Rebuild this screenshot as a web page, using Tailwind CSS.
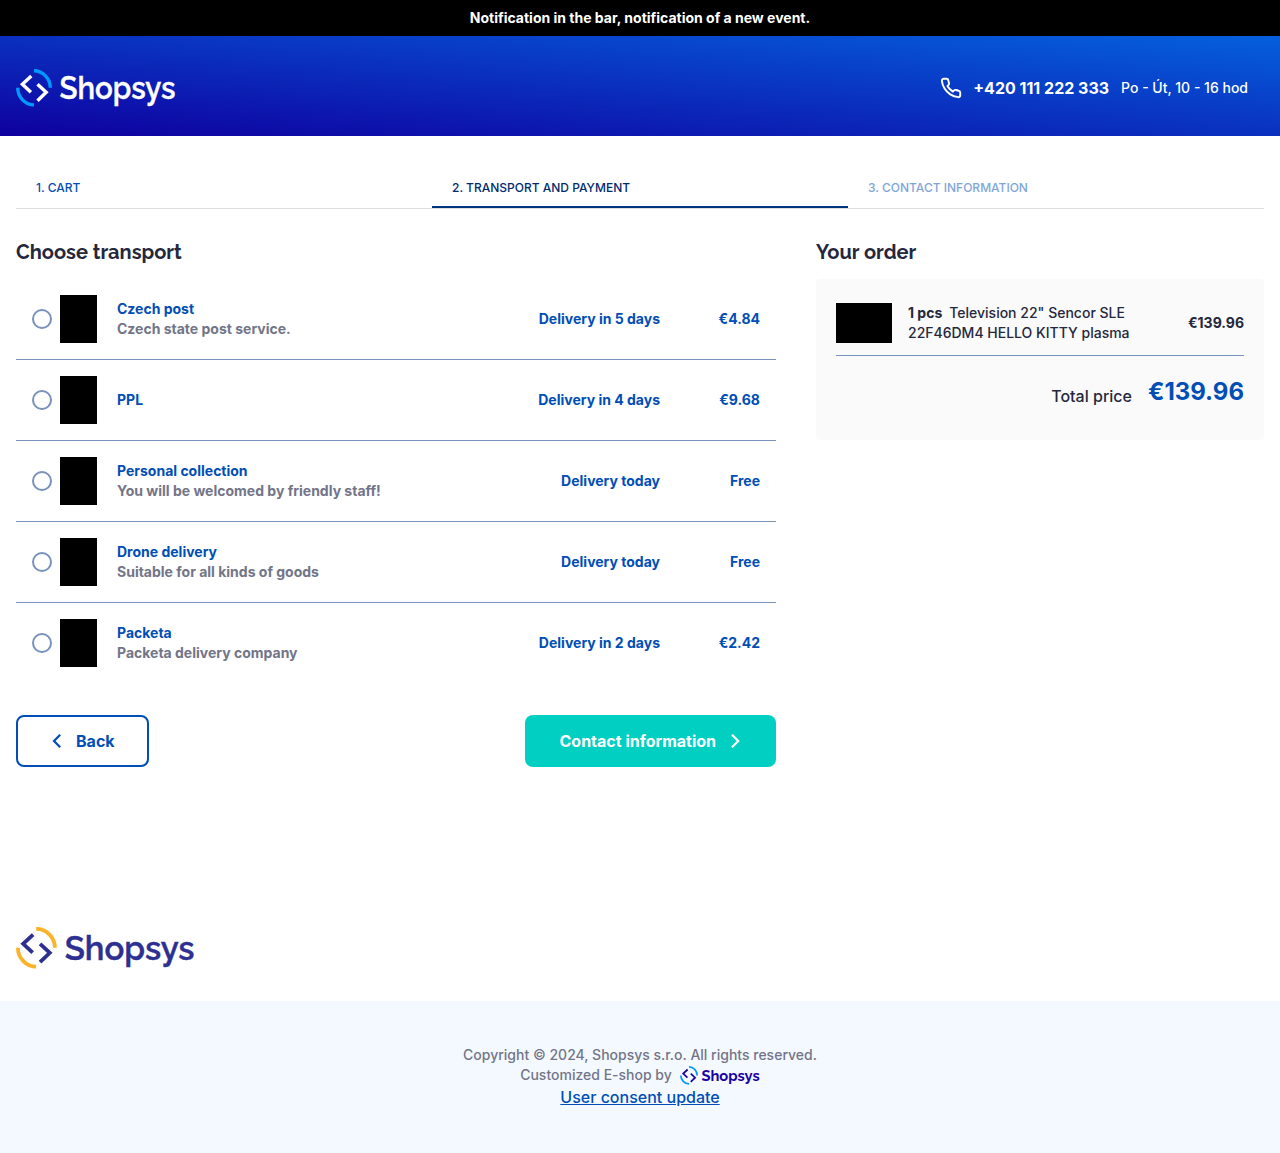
<!DOCTYPE html>
<html lang="en">
<head>
<meta charset="utf-8">
<title>Transport and payment - Shopsys</title>
<script src="https://cdn.jsdelivr.net/npm/@tailwindcss/browser@4"></script>
</head>
<body class="min-h-screen bg-white font-['Inter',sans-serif] text-sm leading-5 font-medium text-[#25283d]">
<div class="flex h-9 items-center justify-center bg-black font-bold text-white">Notification in the bar, notification of a new event.</div>
<header class="flex h-25 items-center justify-between bg-linear-to-tr/srgb from-[#0f00a0] to-[#0560dd] px-4 pt-1">
  <svg class="h-[38px] w-40 overflow-visible text-white" viewBox="0 0 160 38" fill="none" stroke="currentColor" stroke-width="3.4">
    <g stroke="#009aff"><path d="M18 1.8A16.4 17.2 0 0 1 34.3 18.8"/><path d="M1.7 18.8A16.4 17.2 0 0 0 18 35.9"/></g>
    <path d="M15.3 7L6.4 15.2L14.9 23.2M21.5 15.2L30.2 23.3L21.5 31.7"/>
    <text x="43.5" y="30.2" textLength="116" lengthAdjust="spacingAndGlyphs" fill="currentColor" stroke="currentColor" stroke-width="0.4" class="font-['Raleway','Lato',sans-serif] text-[31px] font-semibold">Shopsys</text>
  </svg>
  <div class="flex items-center pr-4 text-white">
    <svg class="size-6" viewBox="-1 -1 26 26" fill="none" stroke="currentColor" stroke-width="2.1" stroke-linecap="round" stroke-linejoin="round"><path d="M22 16.92v3a2 2 0 0 1-2.18 2 19.8 19.8 0 0 1-8.63-3.07 19.5 19.5 0 0 1-6-6A19.8 19.8 0 0 1 2.12 4.18 2 2 0 0 1 4.11 2h3a2 2 0 0 1 2 1.72c.13.96.36 1.9.7 2.81a2 2 0 0 1-.45 2.11L8.09 9.91a16 16 0 0 0 6 6l1.27-1.27a2 2 0 0 1 2.11-.45c.91.34 1.85.57 2.81.7A2 2 0 0 1 22 16.92z"/></svg>
    <span class="ml-2.5 text-base font-bold">+420 111 222 333</span>
    <span class="ml-3">Po - Út, 10 - 16 hod</span>
  </div>
</header>
<main class="px-4 pt-8">
  <nav class="grid h-[41px] grid-cols-3 border-b border-[#dcdfe0] text-xs uppercase">
    <div class="flex items-center px-5 text-[#004eb6]">1. Cart</div>
    <div class="flex items-center border-b-2 border-[#00347f] px-5 pt-0.5 text-[#002c6e]">2. Transport and payment</div>
    <div class="flex items-center px-5 text-[#7fa6da]">3. Contact information</div>
  </nav>
  <div class="flex gap-10 pt-[30px]">
    <section class="w-[760px]">
      <h2 class="h-10 font-['Raleway','Lato',sans-serif] text-xl leading-[26px] font-bold">Choose transport</h2>
      <ul class="divide-y divide-[#7892bc] font-bold text-[#004eb6]">
        <li class="flex h-[81px] items-center px-4"><span class="size-5 rounded-full border-2 border-[#7892bc]"></span><span class="ml-2 h-12 w-[37px] bg-black"></span><div class="ml-5 grow">Czech post<div class="text-[#727588]">Czech state post service.</div></div><span>Delivery in 5 days</span><span class="w-25 text-right">€4.84</span></li>
        <li class="flex h-[81px] items-center px-4"><span class="size-5 rounded-full border-2 border-[#7892bc]"></span><span class="ml-2 h-12 w-[37px] bg-black"></span><div class="ml-5 grow">PPL</div><span>Delivery in 4 days</span><span class="w-25 text-right">€9.68</span></li>
        <li class="flex h-[81px] items-center px-4"><span class="size-5 rounded-full border-2 border-[#7892bc]"></span><span class="ml-2 h-12 w-[37px] bg-black"></span><div class="ml-5 grow">Personal collection<div class="text-[#727588]">You will be welcomed by friendly staff!</div></div><span>Delivery today</span><span class="w-25 text-right">Free</span></li>
        <li class="flex h-[81px] items-center px-4"><span class="size-5 rounded-full border-2 border-[#7892bc]"></span><span class="ml-2 h-12 w-[37px] bg-black"></span><div class="ml-5 grow">Drone delivery<div class="text-[#727588]">Suitable for all kinds of goods</div></div><span>Delivery today</span><span class="w-25 text-right">Free</span></li>
        <li class="flex h-20 items-center px-4"><span class="size-5 rounded-full border-2 border-[#7892bc]"></span><span class="ml-2 h-12 w-[37px] bg-black"></span><div class="ml-5 grow">Packeta<div class="text-[#727588]">Packeta delivery company</div></div><span>Delivery in 2 days</span><span class="w-25 text-right">€2.42</span></li>
      </ul>
      <div class="mt-8 flex justify-between text-base font-bold">
        <button class="flex h-13 w-[133px] items-center rounded-lg border-2 border-[#004eb6] pl-[31px] text-[#004eb6]"><svg class="mr-[11px] size-4" viewBox="0 0 16 16" fill="none" stroke="currentColor" stroke-width="2.2"><path d="M11.2 1.8L5 8L11.2 14.2"/></svg>Back</button>
        <button class="flex h-13 w-[251px] items-center rounded-lg bg-[#00cfc1] pl-[34.5px] text-white">Contact information<svg class="ml-[11.5px] size-4" viewBox="0 0 16 16" fill="none" stroke="currentColor" stroke-width="2.2"><path d="M4 1.8L10.2 8L4 14.2"/></svg></button>
      </div>
    </section>
    <aside class="w-[448px]">
      <h2 class="h-10 font-['Raleway','Lato',sans-serif] text-xl leading-[26px] font-bold">Your order</h2>
      <div class="h-[161px] rounded bg-[#fafafa] px-5 pt-6">
        <div class="flex h-[53px] items-start border-b border-[#7892bc]">
          <div class="h-10 w-14 bg-black"></div>
          <div class="ml-4 w-[250px]"><b class="mr-[7px] font-bold">1 pcs</b>Television 22" Sencor SLE 22F46DM4 HELLO KITTY plasma</div>
          <span class="mt-2.5 ml-auto font-bold">€139.96</span>
        </div>
        <div class="flex items-end justify-end gap-4 pt-5"><span class="pb-[2px] text-base leading-5">Total price</span><span class="text-2xl leading-8 font-bold text-[#004eb6]">€139.96</span></div>
      </div>
    </aside>
  </div>
</main>
<footer class="pt-40">
  <svg class="ml-4 h-[42px] w-[179px] overflow-visible text-[#2d3091]" viewBox="0 0 160 38" preserveAspectRatio="none" fill="none" stroke="currentColor" stroke-width="3.4">
    <g stroke="#fcb32c"><path d="M18 1.8A16.6 17.2 0 0 1 34.8 18.8"/><path d="M1.7 18.8A16.4 17.2 0 0 0 18 35.9"/></g>
    <path d="M15.3 7L6.4 15.2L14.9 23.2M21.5 15.2L30.2 23.3L21.5 31.7"/>
    <text x="43.5" y="30.2" textLength="116" lengthAdjust="spacingAndGlyphs" fill="currentColor" stroke="currentColor" stroke-width="0.4" class="font-['Raleway','Lato',sans-serif] text-[31px] font-semibold">Shopsys</text>
  </svg>
  <div class="mt-8 flex h-38 flex-col items-center bg-[#f4f9ff] pt-11 text-[#727588]">
    <div>Copyright © 2024, Shopsys s.r.o. All rights reserved.</div>
    <div class="flex items-center">Customized E-shop by
      <svg class="ml-2 h-[19px] w-20 overflow-visible text-[#1b00a3]" viewBox="0 0 160 38" fill="none" stroke="currentColor" stroke-width="3.4">
        <g stroke="#009aff"><path d="M18 1.8A16.4 17.2 0 0 1 34.3 18.8"/><path d="M1.7 18.8A16.4 17.2 0 0 0 18 35.9"/></g>
        <path d="M15.3 7L6.4 15.2L14.9 23.2M21.5 15.2L30.2 23.3L21.5 31.7"/>
        <text x="43" y="29" textLength="116.5" lengthAdjust="spacingAndGlyphs" fill="currentColor" stroke="none" class="font-['Raleway','Lato',sans-serif] text-[30px] font-bold">Shopsys</text>
      </svg>
    </div>
    <a href="#" class="text-base text-[#004eb6] underline">User consent update</a>
  </div>
</footer>
</body>
</html>
